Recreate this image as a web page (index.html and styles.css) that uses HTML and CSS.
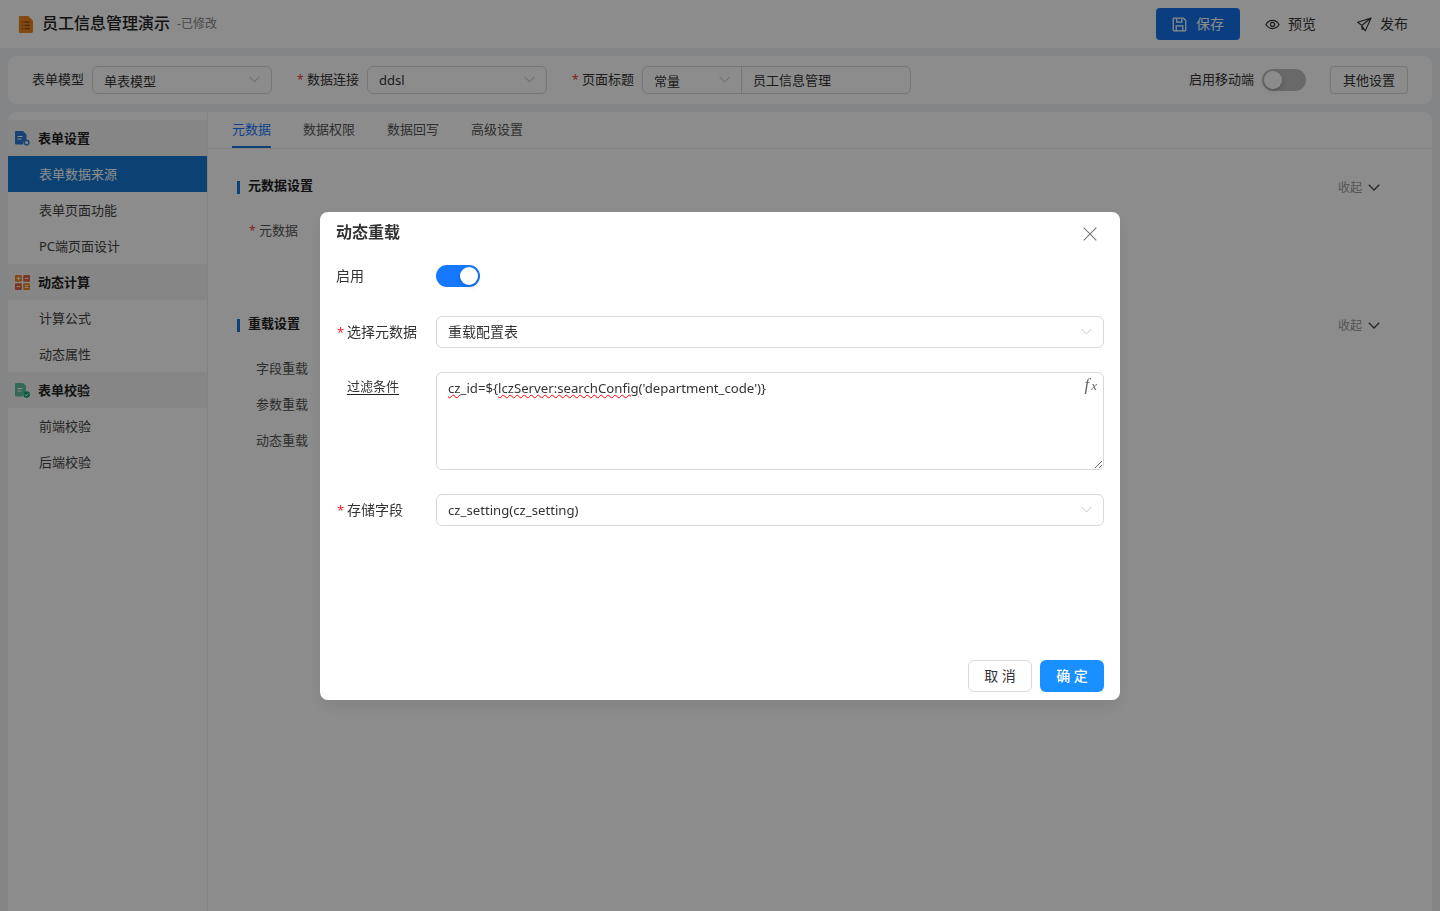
FILE: index.html
```html
<!DOCTYPE html>
<html lang="zh-CN">
<head>
<meta charset="utf-8">
<title>员工信息管理演示</title>
<link rel="stylesheet" href="styles.css">
</head>
<body>
<div class="app">
  <header class="topbar">
    <div class="brand">
      <svg class="brand-icon" viewBox="0 0 16 18"><path d="M2 0h9l5 5v11.500a1.500 1.500 0 0 1-1.500 1.500h-12.500a1 1 0 0 1-1-1v-16a1 1 0 0 1 1-1z" fill="#f0851e"/><path d="M4 6.500h1.500M7 6.500h5.500M4 10h1.500M7 10h5.500M4 13.500h1.500M7 13.500h5.500" stroke="#8a4208" stroke-width="1.300"/></svg>
      <span class="brand-title">员工信息管理演示</span>
      <span class="brand-status">-已修改</span>
    </div>
    <div class="actions">
      <button class="save-btn">
        <svg class="act-icon" viewBox="0 0 16 16" fill="none" stroke="currentColor" stroke-width="1.300"><path d="M2 1.300h10.200l2.500 2.500v9.700a1.200 1.200 0 0 1-1.200 1.200H2.500a1.200 1.200 0 0 1-1.200-1.200V2z"/><path d="M5 1.500v4h5.500v-4M4.500 14.700V9.500h7v5.200"/></svg>
        <span class="act-text">保存</span>
      </button>
      <div class="act-link">
        <svg class="act-icon" viewBox="0 0 16 16" fill="none" stroke="currentColor" stroke-width="1.300"><path d="M1 8c1.800-3 4.100-4.300 7-4.300S13.200 5 15 8c-1.800 3-4.100 4.300-7 4.300S2.800 11 1 8z"/><circle cx="8" cy="8" r="2.200"/></svg>
        <span class="act-text">预览</span>
      </div>
      <div class="act-link">
        <svg class="act-icon" viewBox="0 0 16 16" fill="none" stroke="currentColor" stroke-width="1.200" stroke-linejoin="round"><path d="M15 1 .8 5.600 5 9 15 1 8.800 14.800 5 9 5.500 13.300 7.500 11.800"/></svg>
        <span class="act-text">发布</span>
      </div>
    </div>
  </header>

  <div class="page">
    <section class="toolbar">
      <div class="tool-field">
        <label class="tool-label">表单模型</label>
        <div class="tool-select"><span>单表模型</span><svg class="chev" viewBox="0 0 12 7"><path d="M.6.600 6 6.200 11.400.6"/></svg></div>
      </div>
      <div class="tool-field">
        <label class="tool-label"><i class="req">*</i>数据连接</label>
        <div class="tool-select plain"><span>ddsl</span><svg class="chev" viewBox="0 0 12 7"><path d="M.6.600 6 6.200 11.400.6"/></svg></div>
      </div>
      <div class="tool-field">
        <label class="tool-label"><i class="req">*</i>页面标题</label>
        <div class="compound">
          <div class="compound-select"><span>常量</span><svg class="chev" viewBox="0 0 12 7"><path d="M.6.600 6 6.200 11.400.6"/></svg></div>
          <div class="compound-input">员工信息管理</div>
        </div>
      </div>
      <div class="tool-right">
        <span class="tool-label">启用移动端</span>
        <span class="switch off"><span class="knob"></span></span>
        <button class="other-btn">其他设置</button>
      </div>
    </section>

    <div class="workspace">
      <nav class="sidebar">
        <div class="nav-group">
          <svg class="nav-icon" viewBox="0 0 15 15"><path d="M1 0h7l3.500 3.500V9a3.500 3.500 0 0 0-3.300 4.500H1a1 1 0 0 1-1-1V1a1 1 0 0 1 1-1z" fill="#2a7bd6"/><path d="M2.500 5.500h5M2.500 8h4" stroke="#fff" stroke-width="1"/><circle cx="11.600" cy="11.600" r="2.300" fill="none" stroke="#2a7bd6" stroke-width="1.500"/></svg>
          <span class="nav-group-text">表单设置</span>
        </div>
        <a class="nav-item active">表单数据来源</a>
        <a class="nav-item">表单页面功能</a>
        <a class="nav-item">PC端页面设计</a>
        <div class="nav-group">
          <svg class="nav-icon" viewBox="0 0 15 15"><rect width="6.800" height="6.800" rx="1" fill="#f0851e"/><rect x="8.200" width="6.800" height="6.800" rx="1" fill="#e2604a"/><rect y="8.200" width="6.800" height="6.800" rx="1" fill="#e2604a"/><rect x="8.200" y="8.200" width="6.800" height="6.800" rx="1" fill="#f0851e"/><path d="M1.600 3.400h3.600M3.400 1.600v3.600M9.800 3.400h3.600M1.600 11.600h3.600M9.800 10.700h3.600M9.800 12.500h3.600" stroke="#fff" stroke-width=".9"/></svg>
          <span class="nav-group-text">动态计算</span>
        </div>
        <a class="nav-item">计算公式</a>
        <a class="nav-item">动态属性</a>
        <div class="nav-group">
          <svg class="nav-icon" viewBox="0 0 15 15"><path d="M1 0h7l3 3v5.500a3.500 3.500 0 0 0-3 5H1a1 1 0 0 1-1-1V1a1 1 0 0 1 1-1z" fill="#5cc0a0"/><path d="M2.500 5.500h5M2.500 8h4" stroke="#fff" stroke-width="1"/><circle cx="11.600" cy="11.600" r="3.300" fill="#12a877"/><path d="m9.900 11.500 1.300 1.300 2.100-2.200" fill="none" stroke="#fff" stroke-width=".9"/></svg>
          <span class="nav-group-text">表单校验</span>
        </div>
        <a class="nav-item">前端校验</a>
        <a class="nav-item">后端校验</a>
      </nav>

      <main class="main">
        <div class="tabs">
          <span class="tab active">元数据</span>
          <span class="tab">数据权限</span>
          <span class="tab">数据回写</span>
          <span class="tab">高级设置</span>
        </div>
        <div class="content">
          <div class="sec-head">
            <span class="sec-title">元数据设置</span>
            <span class="collapse">收起<svg class="chev-dark" viewBox="0 0 12 7"><path d="M.8.800 6 6 11.200.8"/></svg></span>
          </div>
          <div class="meta-row"><i class="req">*</i>元数据</div>
          <div class="sec-head second">
            <span class="sec-title">重载设置</span>
            <span class="collapse">收起<svg class="chev-dark" viewBox="0 0 12 7"><path d="M.8.800 6 6 11.200.8"/></svg></span>
          </div>
          <div class="reload-row">字段重载</div>
          <div class="reload-row">参数重载</div>
          <div class="reload-row">动态重载</div>
        </div>
      </main>
    </div>
  </div>
</div>

<div class="overlay">
  <div class="modal">
    <div class="modal-head">
      <span class="modal-title">动态重载</span>
      <svg class="close" viewBox="0 0 14 14"><path d="M.7.700 13.300 13.300M13.300.700.7 13.300"/></svg>
    </div>
    <div class="modal-body">
      <div class="form-row toggle-row">
        <label class="form-label">启用</label>
        <span class="switch on"><span class="knob"></span></span>
      </div>
      <div class="form-row">
        <label class="form-label"><i class="req strong">*</i>选择元数据</label>
        <div class="form-select"><span class="select-text">重载配置表</span><svg class="chev light" viewBox="0 0 12 7"><path d="M.6.600 6 6.200 11.400.6"/></svg></div>
      </div>
      <div class="form-row top">
        <label class="form-label filter"><span class="filter-text">过滤条件</span></label>
        <div class="textarea-wrap">
          <div class="code-area"><span class="wavy">cz</span>_id=${<span class="wavy">lczServer:searchConfig</span>('department_code')}</div>
          <span class="fx">f<small class="fx-x">x</small></span>
        </div>
      </div>
      <div class="form-row">
        <label class="form-label"><i class="req strong">*</i>存储字段</label>
        <div class="form-select"><span class="select-text latin">cz_setting(cz_setting)</span><svg class="chev light" viewBox="0 0 12 7"><path d="M.6.600 6 6.200 11.400.6"/></svg></div>
      </div>
    </div>
    <div class="modal-foot">
      <button class="btn-cancel">取 消</button>
      <button class="btn-ok">确 定</button>
    </div>
  </div>
</div>
</body>
</html>
```

FILE: styles.css
```css
* { box-sizing: border-box; }
html, body { margin: 0; height: 100%; overflow: hidden; }
body {
  font-family: "Noto Sans", "Noto Sans CJK SC", sans-serif;
  font-size: 13px;
  color: rgba(0, 0, 0, .85);
  background: #f0f2f5;
}
button { font-family: inherit; cursor: pointer; }
i { font-style: normal; }

.app { height: 911px; display: flex; flex-direction: column; }

.topbar {
  height: 48px;
  flex: none;
  background: #fff;
  display: flex;
  align-items: center;
  justify-content: space-between;
  padding: 0 32px 0 18px;
}
.brand { display: flex; align-items: center; }
.brand-icon { width: 15px; height: 17px; margin-right: 8px; }
.brand-title { font-size: 16px; font-weight: 500; color: #222; line-height: 24px; margin: -2px 0 0 1px; }
.brand-status { font-size: 12px; color: #888; margin: -2px 0 0 7px; }

.actions { display: flex; align-items: center; }
.save-btn {
  width: 84px;
  height: 32px;
  border: 0;
  border-radius: 4px;
  background: #1471ea;
  color: #fff;
  font-size: 14px;
  display: flex;
  align-items: center;
  justify-content: center;
  gap: 9px;
  margin-right: 25px;
}
.act-icon { width: 15px; height: 15px; flex: none; }
.act-text { margin-top: -2px; }
.act-link { display: flex; align-items: center; gap: 8px; font-size: 14px; margin-right: 41px; color: #333; }
.act-link:last-child { margin-right: 0; }

.page { flex: 1; min-height: 0; padding: 8px 8px 0; display: flex; flex-direction: column; gap: 8px; }

.toolbar {
  height: 48px;
  flex: none;
  background: #fff;
  border-radius: 8px;
  display: flex;
  align-items: center;
  padding: 0 24px;
  gap: 24px;
}
.tool-field { display: flex; align-items: center; gap: 8px; }
.tool-label { font-size: 13px; color: #333; white-space: nowrap; line-height: 20px; margin-top: -2px; }
.req { display: inline-block; width: 10px; color: #e63c3c; font-size: 12px; margin-left: 1px; }
.tool-select {
  width: 180px;
  height: 28px;
  border: 1px solid #d9d9d9;
  border-radius: 6px;
  padding: 0 11px;
  display: flex;
  align-items: center;
  justify-content: space-between;
  font-size: 13px;
  color: #333;
}
.tool-select span { margin-top: 1px; }
.tool-select.plain span { margin-top: -1px; }
.chev { width: 11px; height: 7px; fill: none; stroke: #b5b5b5; stroke-width: 1; margin-top: -2px; }
.compound { display: flex; height: 28px; border: 1px solid #d9d9d9; border-radius: 6px; width: 269px; }
.compound-select {
  width: 99px;
  border-right: 1px solid #d9d9d9;
  padding: 0 11px;
  display: flex;
  align-items: center;
  justify-content: space-between;
}
.compound-select span { margin-top: 1px; }
.compound-input { flex: 1; padding: 0 11px; line-height: 26px; color: #333; }

.tool-right { margin-left: auto; display: flex; align-items: center; }
.switch {
  display: flex;
  width: 44px;
  height: 22px;
  border-radius: 11px;
  padding: 2px;
  flex: none;
}
.switch.off { background: #bfbfbf; margin: 0 24px 0 8px; }
.switch.on { background: #1677ff; justify-content: flex-end; }
.knob { width: 18px; height: 18px; border-radius: 50%; background: #fff; box-shadow: 0 2px 4px rgba(0, 35, 11, .2); }
.other-btn {
  width: 78px;
  height: 28px;
  border: 1px solid #d9d9d9;
  border-radius: 4px;
  background: #fff;
  font-size: 13px;
  color: #333;
  padding: 0 0 2px;
}

.workspace { flex: 1; min-height: 0; display: flex; background: #fff; border-radius: 8px 8px 0 0; overflow: hidden; }
.sidebar { width: 200px; flex: none; border-right: 1px solid #eee; padding-top: 8px; }
.nav-group {
  height: 36px;
  background: #f5f5f5;
  display: flex;
  align-items: center;
  padding-left: 7px;
  gap: 8px;
  font-weight: 700;
  color: #222;
}
.nav-group-text { margin-top: -2px; }
.nav-icon { width: 15px; height: 15px; flex: none; }
.nav-item { display: block; height: 36px; line-height: 36px; padding-left: 31px; color: #444; }
.nav-item.active { background: #1677d2; color: #fff; width: 199px; }

.main { flex: 1; min-width: 0; }
.tabs { height: 37px; border-bottom: 1px solid #eee; display: flex; gap: 32px; padding-left: 24px; }
.tab { height: 36px; line-height: 34px; color: #555; }
.tab.active { color: #1677ff; border-bottom: 2px solid #1677d8; }

.content { padding: 28px 52px 0 29px; }
.sec-head { height: 20px; display: flex; align-items: center; justify-content: space-between; }
.sec-head.second { margin-top: 67px; }
.sec-title { border-left: 3px solid #1677d8; padding: 0 0 4px 8px; font-weight: 700; color: #222; line-height: 13px; height: 13px; display: flex; align-items: center; }
.collapse { font-size: 12px; color: #999; display: flex; align-items: center; gap: 6px; }
.chev-dark { width: 12px; height: 7px; fill: none; stroke: #444; stroke-width: 1.300; }
.meta-row { margin: 15px 0 0 11px; height: 36px; line-height: 36px; color: #555; }
.reload-row { margin-left: 19px; height: 36px; line-height: 36px; color: #555; }
.sec-head.second + .reload-row { margin-top: 15px; }

.overlay {
  position: fixed;
  inset: 0;
  background: rgba(0, 0, 0, .45);
  display: flex;
  justify-content: center;
  padding-top: 212px;
}
.modal {
  width: 800px;
  height: 488px;
  background: #fff;
  border-radius: 8px;
  display: flex;
  flex-direction: column;
  box-shadow: 0 6px 16px rgba(0, 0, 0, .08);
}
.modal-head { height: 40px; flex: none; display: flex; align-items: center; justify-content: space-between; padding: 0 23px 0 16px; }
.modal-title { font-size: 16px; font-weight: 700; color: #333; margin-top: -2px; }
.close { width: 14px; height: 14px; fill: none; stroke: #777; stroke-width: 1.100; margin-top: 4px; }
.modal-body { flex: 1; padding: 13px 16px 0; display: flex; flex-direction: column; gap: 24px; }
.form-row { display: flex; align-items: center; }
.form-row.top { align-items: flex-start; }
.toggle-row { margin-bottom: 5px; }
.form-label { width: 100px; flex: none; font-size: 14px; color: #333; white-space: nowrap; margin-top: -2px; }
.req.strong { color: #f5222d; font-size: 13px; }
.filter { padding: 5px 0 0 11px; font-size: 13px; line-height: 19px; margin-top: 0; }
.filter-text { display: inline-block; border-bottom: 1px solid #222; height: 18px; line-height: 18px; }
.form-select {
  flex: 1;
  height: 32px;
  border: 1px solid #d9d9d9;
  border-radius: 6px;
  padding: 0 11px;
  display: flex;
  align-items: center;
  justify-content: space-between;
  font-size: 14px;
  color: #333;
}
.select-text { margin-top: -2px; }
.select-text.latin { font-size: 13.2px; margin-top: 0; }
.chev.light { stroke: #c4c4c4; }
.textarea-wrap { flex: 1; position: relative; display: flex; }
.code-area {
  flex: 1;
  height: 98px;
  border: 1px solid #d9d9d9;
  border-radius: 6px;
  padding: 4px 11px;
  font-size: 13.2px;
  line-height: 22px;
  color: #333;
  resize: vertical;
  overflow: auto;
}
.wavy { text-decoration: underline wavy #f00; text-decoration-thickness: 1px; }
.fx { position: absolute; top: 3px; right: 7px; font: italic 17px "Liberation Serif", serif; letter-spacing: 2px; color: #666; }
.fx-x { font-size: 13px; letter-spacing: 0; }
.modal-foot { flex: none; display: flex; justify-content: flex-end; gap: 8px; padding: 8px 16px; }
.btn-cancel, .btn-ok { width: 64px; height: 32px; border-radius: 6px; font-size: 14px; padding: 0 0 2px; }
.btn-cancel { border: 1px solid #d9d9d9; background: #fff; color: #333; }
.btn-ok { border: 0; background: #1890ff; color: #fff; font-weight: 500; }
```
